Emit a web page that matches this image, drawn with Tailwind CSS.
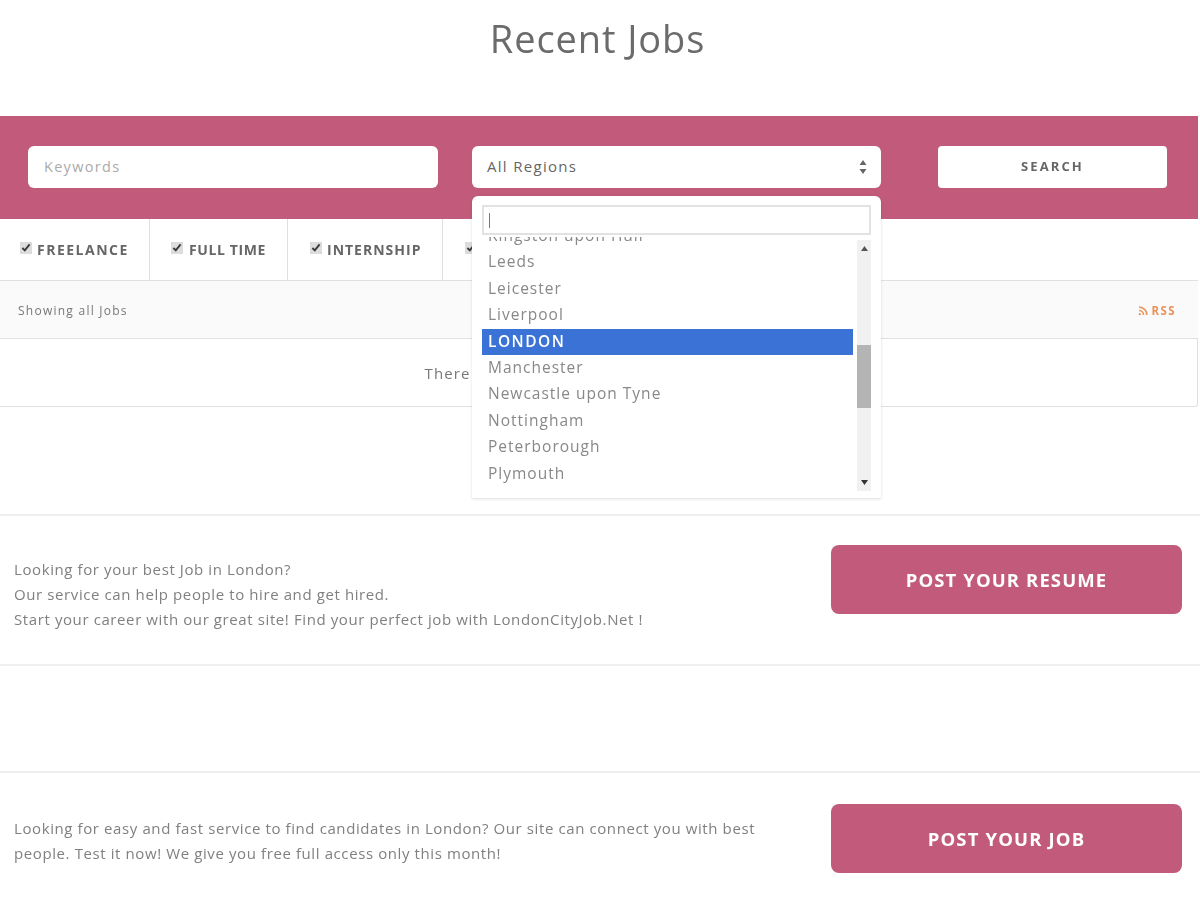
<!DOCTYPE html>
<html lang="en">

<head>
    <meta charset="UTF-8">
    <meta name="viewport" content="width=device-width, initial-scale=1.0">
    <script src="https://cdn.jsdelivr.net/npm/@tailwindcss/browser@4"></script>
    <title>Recent Jobs</title>
</head>

<body class="bg-white font-['Open_Sans',sans-serif] text-[#777] overflow-hidden h-[900px]">
    <div class="blur-[0.5px]">
        <!-- Title -->
        <h1 class="h-[116px] pt-[14px] pr-[5px] text-center text-[38px] leading-[48px] text-[#6b6b6b] tracking-[0.9px]">Recent Jobs</h1>

        <!-- Search band -->
        <div class="relative mr-[2px]">
            <form class="h-[103px] bg-[#c25b7b] flex items-start pt-[30px] pl-[28px]">
                <div class="w-[410px] h-[42px] bg-white rounded-md flex items-center pl-4 text-[14.5px] text-[#aaa] tracking-[1.3px]">Keywords</div>
                <div class="ml-[34px] w-[409px] h-[42px] bg-white rounded-md flex items-center justify-between pl-[15px] pr-[14px] text-[15px] text-[#666] tracking-[1.3px]">
                    <span class="-mt-[2px]">All Regions</span>
                    <svg width="8" height="16" viewBox="0 0 8 16" fill="#666">
                        <path d="M4 1 7.5 6H.5zM4 15 .5 10h7z" />
                    </svg>
                </div>
                <div class="ml-[57px] w-[229px] h-[42px] bg-white rounded-[4px] flex items-center justify-center text-[13px] font-bold text-[#666] tracking-[2.1px]">SEARCH</div>
            </form>

            <!-- Job type filters -->
            <ul class="h-[62px] flex border-b border-[#e0e0e0] text-[14px] font-bold text-[#666]">
                <li class="w-[150px] border-r border-[#e0e0e0] flex items-center pl-[20px] gap-[5px] tracking-[1.5px]">
                    <input type="checkbox" checked class="w-[12px] h-[12px] accent-[#ddd] -mt-[3px]"><span>FREELANCE</span>
                </li>
                <li class="w-[138px] border-r border-[#e0e0e0] flex items-center pl-[21px] gap-[6px] tracking-[0.6px]">
                    <input type="checkbox" checked class="w-[12px] h-[12px] accent-[#ddd] -mt-[3px]"><span>FULL TIME</span>
                </li>
                <li class="w-[155px] border-r border-[#e0e0e0] flex items-center pl-[22px] gap-[5px] tracking-[1px]">
                    <input type="checkbox" checked class="w-[12px] h-[12px] accent-[#ddd] -mt-[3px]"><span>INTERNSHIP</span>
                </li>
                <li class="w-[150px] flex items-center pl-[22px] gap-[6px] tracking-[1px]">
                    <input type="checkbox" checked class="w-[12px] h-[12px] accent-[#ddd] -mt-[3px]"><span>PART TIME</span>
                </li>
            </ul>

            <!-- Results bar -->
            <div class="h-[58px] bg-[#fafafa] border-b border-[#e0e0e0] flex items-center justify-between pt-[2px] pl-[18px] pr-[22px] text-[12px] tracking-[1.25px]">
                <span>Showing all Jobs</span>
                <span class="flex items-center gap-[4px] text-[#e8935a] font-bold text-[11.5px] tracking-[1.4px]">
                    <svg width="10" height="10" viewBox="0 0 9 9" fill="none" stroke="#e8935a" stroke-width="1.4">
                        <path d="M1 1a7 7 0 0 1 7 7M1 4a4 4 0 0 1 4 4" />
                        <circle cx="1.6" cy="7.4" r="1" fill="#e8935a" stroke="none" />
                    </svg>
                    RSS
                </span>
            </div>
            <div class="h-[68px] border-b border-r border-[#e0e0e0] rounded-br-[3px] flex items-center justify-center pt-[1px] text-[15px] text-[#777] tracking-[1.1px]">There are no listings matching your search.</div>

            <!-- Region dropdown -->
            <div class="absolute left-[472px] top-[80px] w-[409px] h-[302px] bg-white rounded-t-md shadow-[0_1px_3px_rgba(0,0,0,0.14)] pt-[9px] px-[10px]">
                <div class="h-[30px] border-2 border-[#e2e2e2] flex items-center pl-[5px]">
                    <span class="w-px h-[15px] bg-[#777]"></span>
                </div>
                <div class="mt-[2px] flex">
                    <ul class="w-[371px] h-[254px] overflow-hidden text-[15.5px] text-[#888] tracking-[1px]">
                        <li class="-mt-[14px] h-[26.4px] leading-[24px] pl-[6px]">Kingston upon Hull</li>
                        <li class="h-[26.4px] leading-[24px] pl-[6px]">Leeds</li>
                        <li class="h-[26.4px] leading-[24px] pl-[6px]">Leicester</li>
                        <li class="h-[26.4px] leading-[24px] pl-[6px]">Liverpool</li>
                        <li class="h-[26.4px] leading-[24px] pl-[6px] bg-[#3a72d6] text-white font-semibold tracking-[1.5px]">LONDON</li>
                        <li class="h-[26.4px] leading-[24px] pl-[6px]">Manchester</li>
                        <li class="h-[26.4px] leading-[24px] pl-[6px]">Newcastle upon Tyne</li>
                        <li class="h-[26.4px] leading-[24px] pl-[6px]">Nottingham</li>
                        <li class="h-[26.4px] leading-[24px] pl-[6px]">Peterborough</li>
                        <li class="h-[26.4px] leading-[24px] pl-[6px]">Plymouth</li>
                    </ul>
                    <!-- Scrollbar -->
                    <div class="ml-[4px] mt-[3px] w-[14px] h-[251px] bg-[#f1f1f1] flex flex-col items-center justify-between relative py-[6px]">
                        <svg width="7" height="5" viewBox="0 0 7 5" fill="#555"><path d="M3.5 0 7 5H0z" /></svg>
                        <div class="absolute left-0 top-[105px] w-[14px] h-[63px] bg-[#b4b4b4]"></div>
                        <svg width="7" height="5" viewBox="0 0 7 5" fill="#333"><path d="M3.5 5 0 0h7z" /></svg>
                    </div>
                </div>
            </div>
        </div>

        <!-- Resume call to action -->
        <section class="mt-[107px] h-[152px] border-y-2 border-[#efefef] flex items-start justify-between pl-[14px] pr-[18px]">
            <p class="mt-[41px] text-[15px] leading-[25px] tracking-[0.6px] text-[#808080]">
                Looking for your best Job in London?<br>
                Our service can help people to hire and get hired.<br>
                Start your career with our great site! Find your perfect job with LondonCityJob.Net !
            </p>
            <a class="mt-[29px] w-[351px] h-[69px] bg-[#c25b7b] rounded-lg flex items-center justify-center text-white font-bold text-[18.5px] tracking-[1.1px]">POST YOUR RESUME</a>
        </section>

        <!-- Job call to action -->
        <section class="mt-[105px] h-[128px] border-t-2 border-[#efefef] flex items-start justify-between pl-[14px] pr-[18px]">
            <p class="mt-[43px] w-[745px] text-[15px] leading-[25px] tracking-[0.6px] text-[#808080]">
                Looking for easy and fast service to find candidates in London? Our site can connect you with best people. Test it now! We give you free full access only this month!
            </p>
            <a class="mt-[31px] w-[351px] h-[69px] bg-[#c25b7b] rounded-lg flex items-center justify-center text-white font-bold text-[18.5px] tracking-[1.15px]">POST YOUR JOB</a>
        </section>
    </div>
</body>

</html>
